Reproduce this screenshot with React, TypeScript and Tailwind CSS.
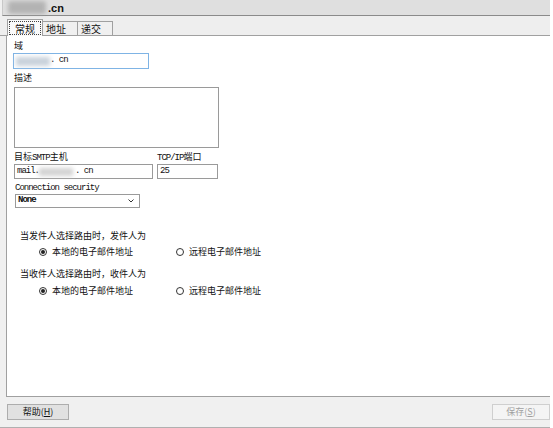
import React from "react";

const cjk = { fontFamily: '"Noto Sans CJK SC", "Noto Sans", sans-serif' };
const mono = { fontFamily: '"Liberation Mono", "Noto Sans CJK SC", monospace' };

function Radio({ checked }: { checked: boolean }) {
  return (
    <span className="w-[8px] h-[8px] rounded-full border border-[#333] bg-white flex items-center justify-center shrink-0">
      {checked && <span className="w-[4px] h-[4px] rounded-full bg-[#222]" />}
    </span>
  );
}

function RadioRow() {
  return (
    <div className="flex items-center h-[12px] text-[9px] leading-[12px] text-[#111]" style={cjk}>
      <div className="flex items-center gap-[5px] ml-[25px] w-[137px]">
        <Radio checked />
        <span>本地的电子邮件地址</span>
      </div>
      <div className="flex items-center gap-[5px]">
        <Radio checked={false} />
        <span>远程电子邮件地址</span>
      </div>
    </div>
  );
}

export default function App() {
  return (
    <div className="w-[553px] h-[428px] bg-white">
      <div className="w-[550px] h-[428px] flex flex-col bg-[#f0f0f0]">
        {/* title bar */}
        <div className="h-[16px] bg-[#dfdfdf] border-b border-[#8a8a8a] border-l border-l-[#c8c8c8] ml-[2px] flex items-center relative">
          <div className="absolute left-[5px] top-[1px] w-[38px] h-[13px] bg-[#a9a9a9] rounded-[3px] blur-[2px] opacity-80" />
          <span className="ml-[45px] text-[11px] font-bold text-[#111] leading-[14px]" style={{ fontFamily: '"Liberation Sans", Arial, sans-serif' }}>.cn</span>
        </div>
        {/* tabs */}
        <div className="h-[20px] bg-[#eeeeee] border-b border-[#a0a0a0] flex items-end pl-[7px] text-[10px] text-[#111]" style={cjk}>
          <div className="w-[36px] h-[17px] bg-[#fafafa] border border-b-0 border-[#a0a0a0] flex items-center justify-center relative top-[1px] p-[1px]">
            <span className="w-full h-full border border-dotted border-[#444] flex items-center justify-center leading-[11px]">常规</span>
          </div>
          <div className="w-[35px] h-[14px] bg-[#f0f0f0] border border-b-0 border-l-0 border-[#a0a0a0] flex items-center pl-[3px] leading-[11px]">地址</div>
          <div className="w-[35px] h-[14px] bg-[#f0f0f0] border border-b-0 border-l-0 border-[#a0a0a0] flex items-center pl-[3px] leading-[11px]">递交</div>
        </div>
        {/* body */}
        <div className="flex-1 ml-[6px] bg-white border-l border-b border-[#a0a0a0] flex flex-col pl-[7px] text-[#111]">
          <div className="mt-[4px] h-[12px] text-[9px] leading-[12px]" style={cjk}>域</div>
          <div className="mt-[1px] w-[136px] h-[16px] border border-[#7fb4e5] flex items-center relative -ml-[1px]">
            <div className="absolute left-[2px] top-[3px] w-[34px] h-[9px] bg-[#c9d2db] blur-[2px]" />
            <span className="ml-[36px] text-[9px] tracking-[-1px]" style={mono}>. cn</span>
          </div>
          <div className="mt-[3px] h-[12px] text-[9px] leading-[12px]" style={cjk}>描述</div>
          <div className="mt-[3px] w-[205px] h-[61px] border border-[#9a9a9a]" />
          <div className="mt-[3px] flex h-[12px] text-[9px] leading-[12px]">
            <span className="w-[143px]" style={cjk}>
              目标<span className="tracking-[-1px]" style={mono}>SMTP</span>主机
            </span>
            <span style={cjk}>
              <span className="tracking-[-1px]" style={mono}>TCP/IP</span>端口
            </span>
          </div>
          <div className="mt-[1px] flex">
            <div className="w-[139px] h-[15px] border border-[#9a9a9a] flex items-center relative">
              <span className="ml-[2px] text-[9px] tracking-[-1px]" style={mono}>mail.</span>
              <div className="absolute left-[24px] top-[3px] w-[34px] h-[8px] bg-[#d3d3d3] blur-[2px]" />
              <span className="ml-[36px] text-[9px] tracking-[-1px]" style={mono}>. cn</span>
            </div>
            <div className="ml-[4px] w-[61px] h-[15px] border border-[#9a9a9a] flex items-center">
              <span className="ml-[2px] text-[9px] tracking-[-1px]" style={mono}>25</span>
            </div>
          </div>
          <div className="mt-[4px] h-[11px] text-[9px] leading-[11px] tracking-[-1px] ml-[1px]" style={mono}>Connection security</div>
          <div className="mt-[0px] ml-[1px] w-[125px] h-[14px] border border-[#9a9a9a] flex items-center justify-between">
            <span className="ml-[2px] text-[9px] tracking-[-1px] font-bold" style={mono}>None</span>
            <svg width="6" height="4" viewBox="0 0 6 4" className="mr-[5px]">
              <path d="M0.5 0.5 L3 3 L5.5 0.5" fill="none" stroke="#333" strokeWidth="1" />
            </svg>
          </div>
          <div className="mt-[22px] ml-[6px] h-[12px] text-[9px] leading-[12px]" style={cjk}>当发件人选择路由时，发件人为</div>
          <div className="mt-[4px]"><RadioRow /></div>
          <div className="mt-[10px] ml-[6px] h-[12px] text-[9px] leading-[12px]" style={cjk}>当收件人选择路由时，收件人为</div>
          <div className="mt-[5px]"><RadioRow /></div>
        </div>
        {/* footer */}
        <div className="h-[31px] flex items-center justify-between pl-[7px] border-b border-[#b0b0b0]">
          <div className="w-[62px] h-[16px] bg-[#e1e1e1] border border-[#adadad] flex items-center justify-center text-[9px] text-[#111]" style={cjk}>
            帮助(<span className="underline">H</span>)
          </div>
          <div className="w-[58px] h-[16px] bg-[#f4f4f4] border border-[#cfcfcf] flex items-center justify-center text-[9px] text-[#a0a0a0]" style={cjk}>
            保存(<span className="underline">S</span>)
          </div>
        </div>
      </div>
    </div>
  );
}
